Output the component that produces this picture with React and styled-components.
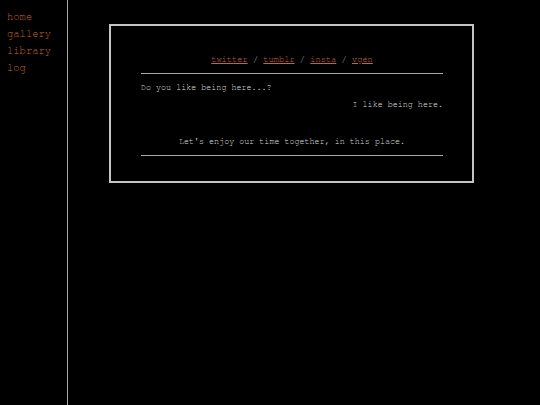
import React from 'react';
import styled, { createGlobalStyle } from 'styled-components';

const GlobalStyle = createGlobalStyle`
  html, body {
    margin: 0;
    padding: 0;
    background: #000;
  }
  body {
    font-family: "Nimbus Mono PS", "FreeMono", "Courier New", "Liberation Mono", monospace;
    color: #dedede;
  }
`;

const Page = styled.div`
  display: flex;
  min-height: 405px;
  background: #000;
`;

const Sidebar = styled.nav`
  width: 68px;
  flex-shrink: 0;
  border-right: 1px solid #a8a8a8;
  padding-top: 9px;
  box-sizing: border-box;
  display: flex;
  flex-direction: column;
`;

const NavLink = styled.a`
  display: block;
  padding-left: 7px;
  font-size: 10.5px;
  line-height: 17px;
  color: #c8672a;
  text-decoration: none;
`;

const Main = styled.main`
  flex: 1;
  padding: 24px 0 0 41px;
`;

const Box = styled.section`
  width: 365px;
  box-sizing: border-box;
  border: 2px solid #c4c4c4;
  padding: 29px 29px 25px 30px;
`;

const Links = styled.div`
  text-align: center;
  font-size: 8.7px;
  line-height: 10px;
  color: #dedede;
`;

const Ext = styled.a`
  color: #c8672a;
  text-decoration: underline;
`;

const Rule = styled.hr`
  border: none;
  height: 1px;
  background: #a8a8a8;
  margin: ${p => p.$top || 0}px 0 0 0;
`;

const Line = styled.p`
  margin: ${p => p.$top || 0}px 0 0 0;
  font-size: 8.4px;
  line-height: 10px;
  text-align: ${p => p.$align || 'left'};
  color: #dedede;
  white-space: pre;
`;

export default function App() {
  return (
    <>
      <GlobalStyle />
      <Page>
        <Sidebar>
          <NavLink href="#">home</NavLink>
          <NavLink href="#">gallery</NavLink>
          <NavLink href="#">library</NavLink>
          <NavLink href="#">log</NavLink>
        </Sidebar>
        <Main>
          <Box>
            <Links>
              <Ext href="#">twitter</Ext> / <Ext href="#">tumblr</Ext> / <Ext href="#">insta</Ext> / <Ext href="#">vgen</Ext>
            </Links>
            <Rule $top={8} />
            <Line $top={9}>Do you like being here...?</Line>
            <Line $top={7} $align="right">I like being here.</Line>
            <Line $top={27} $align="center">Let's enjoy our time together, in this place.</Line>
            <Rule $top={8} />
          </Box>
        </Main>
      </Page>
    </>
  );
}
